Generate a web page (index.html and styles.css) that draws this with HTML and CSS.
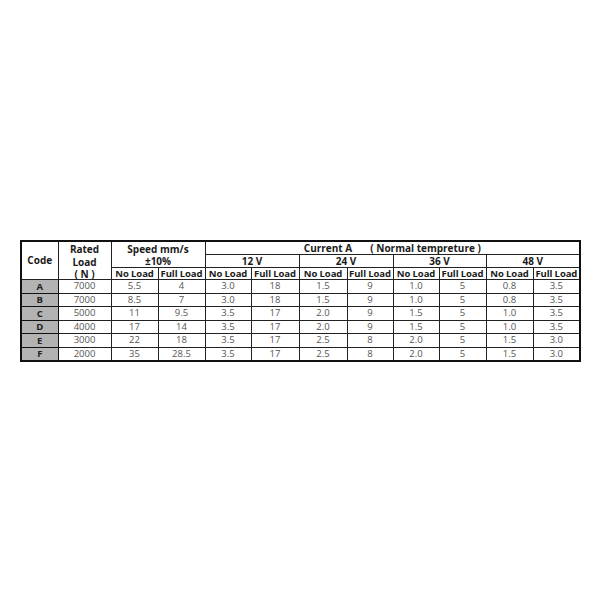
FILE: index.html
```html
<!DOCTYPE html>
<html>
<head>
<meta charset="utf-8">
<link rel="stylesheet" href="styles.css">
</head>
<body>
<div class="page">
<table class="spec">
  <colgroup>
    <col class="c-code"><col class="c-load">
    <col class="c-a"><col class="c-a">
    <col class="c-b"><col class="c-c"><col class="c-c"><col class="c-b">
    <col class="c-b"><col class="c-a"><col class="c-a"><col class="c-a">
  </colgroup>
  <thead>
    <tr class="h1">
      <th rowspan="3" class="mid">Code</th>
      <th rowspan="3" class="top"><div class="clip3">Rated<br>Load<br>( N )</div></th>
      <th colspan="2" rowspan="2" class="top"><div class="clip2">Speed mm/s<br>±10%</div></th>
      <th colspan="8">Current A&nbsp;&nbsp;&nbsp;&nbsp;&nbsp;&nbsp;&nbsp;( Normal tempreture )</th>
    </tr>
    <tr class="h2">
      <th colspan="2">12 V</th>
      <th colspan="2">24 V</th>
      <th colspan="2">36 V</th>
      <th colspan="2">48 V</th>
    </tr>
    <tr class="h3">
      <th>No Load</th><th>Full Load</th>
      <th>No Load</th><th>Full Load</th>
      <th>No Load</th><th>Full Load</th>
      <th>No Load</th><th>Full Load</th>
      <th>No Load</th><th>Full Load</th>
    </tr>
  </thead>
  <tbody>
    <tr><th class="code">A</th><td>7000</td><td>5.5</td><td>4</td><td>3.0</td><td>18</td><td>1.5</td><td>9</td><td>1.0</td><td>5</td><td>0.8</td><td>3.5</td></tr>
    <tr><th class="code">B</th><td>7000</td><td>8.5</td><td>7</td><td>3.0</td><td>18</td><td>1.5</td><td>9</td><td>1.0</td><td>5</td><td>0.8</td><td>3.5</td></tr>
    <tr><th class="code">C</th><td>5000</td><td>11</td><td>9.5</td><td>3.5</td><td>17</td><td>2.0</td><td>9</td><td>1.5</td><td>5</td><td>1.0</td><td>3.5</td></tr>
    <tr><th class="code">D</th><td>4000</td><td>17</td><td>14</td><td>3.5</td><td>17</td><td>2.0</td><td>9</td><td>1.5</td><td>5</td><td>1.0</td><td>3.5</td></tr>
    <tr><th class="code">E</th><td>3000</td><td>22</td><td>18</td><td>3.5</td><td>17</td><td>2.5</td><td>8</td><td>2.0</td><td>5</td><td>1.5</td><td>3.0</td></tr>
    <tr><th class="code">F</th><td>2000</td><td>35</td><td>28.5</td><td>3.5</td><td>17</td><td>2.5</td><td>8</td><td>2.0</td><td>5</td><td>1.5</td><td>3.0</td></tr>
  </tbody>
</table>
</div>
</body>
</html>
```

FILE: styles.css
```css
html, body {
  margin: 0;
  padding: 0;
  background: #ffffff;
}

.page {
  padding: 240px 0 0 20px;
}

.spec {
  border-collapse: collapse;
  table-layout: fixed;
  width: 561px;
  border: 2px solid #111;
  font-family: "Open Sans", "Liberation Sans", sans-serif;
  font-size: 10px;
  color: #222;
}

.c-code { width: 37px; }
.c-load { width: 53px; }
.c-a { width: 47px; }
.c-b { width: 46px; }
.c-c { width: 48px; }

.spec th,
.spec td {
  border: 1px solid #222;
  padding: 0;
  text-align: center;
  white-space: nowrap;
  overflow: hidden;
}

.spec th {
  font-weight: 700;
  color: #1a1a1a;
  line-height: 11px;
  font-size: 10px;
}

.spec .h3 th {
  font-size: 9.5px;
  letter-spacing: -0.1px;
}

.spec td {
  font-weight: 400;
  color: #555;
  line-height: 12px;
  font-size: 9.5px;
}

.h1 { height: 13px; }
.h2 { height: 12px; }
.h3 { height: 12px; }

.spec tbody tr { height: 13.5px; }

.mid { vertical-align: middle; }
.top { vertical-align: top; }

.clip3 {
  height: 36px;
  line-height: 12.5px;
  padding-top: 1px;
  overflow: hidden;
}

.clip2 {
  height: 24px;
  line-height: 12px;
  padding-top: 1px;
  overflow: hidden;
}

.spec th.code {
  background: #b3b3b3;
  border-color: #111;
  font-size: 9.5px;
  color: #222;
}
```
